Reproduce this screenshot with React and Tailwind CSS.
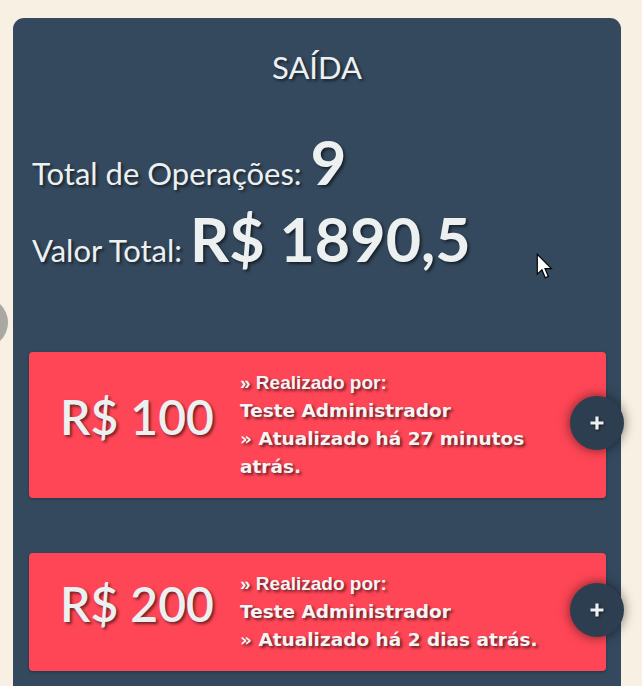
import React from "react";

const items = [
  { amount: "R$ 100", by: "Teste Administrador", when: "» Atualizado há 27 minutos atrás." },
  { amount: "R$ 200", by: "Teste Administrador", when: "» Atualizado há 2 dias atrás." },
];

const hShadow = "[text-shadow:2px_2px_3px_rgba(0,0,0,0.55)]";

function Item({ amount, by, when }) {
  return (
    <div className="relative flex items-center bg-[#ff4656] rounded-[4px] py-[17px] shadow-[0_1px_3px_rgba(0,0,0,0.3)]">
      <div
        className="w-[211px] shrink-0 pl-[5px] mb-[16px] text-center text-[#ecf0f1] text-[48px] leading-none font-semibold [text-shadow:2px_2px_3px_rgba(0,0,0,0.55)]"
        style={{ fontFamily: "Lato, sans-serif" }}
      >
        {amount}
      </div>
      <div className="w-[330px] text-[#f4f4f4] leading-[28px] [text-shadow:2px_2px_3px_rgba(0,0,0,0.6)]">
        <div className="text-[19px] font-bold" style={{ fontFamily: '"Liberation Sans", Arial, sans-serif' }}>
          » Realizado por:
        </div>
        <div className="text-[18.5px] font-bold" style={{ fontFamily: '"DejaVu Sans", sans-serif' }}>
          {by}
          <br />
          {when}
        </div>
      </div>
      <div className="absolute right-[-18px] top-[calc(50%-2px)] -translate-y-1/2 w-[54px] h-[54px] rounded-full bg-[#2c3e50] shadow-[0_0_12px_rgba(0,0,0,0.55)] flex items-center justify-center">
        <svg width="16" height="16" viewBox="0 0 16 16" className="drop-shadow-[1px_1px_1px_rgba(0,0,0,0.6)]">
          <path d="M8 1.5v13M1.5 8h13" stroke="#ecf0f1" strokeWidth="3.2" />
        </svg>
      </div>
    </div>
  );
}

export default function App() {
  return (
    <div className="relative min-h-screen h-[686px] overflow-hidden bg-[#f8f0e3]" style={{ fontFamily: "Lato, sans-serif" }}>
      <div className="absolute left-[-43px] top-[297px] w-[51px] h-[51px] rounded-full bg-[#a9a8a3]" />
      <div className="pt-[18px] pl-[13px] w-[621px]">
        <div className="bg-[#34495e] rounded-[11px] pt-[31px] pb-[40px] text-[#ecf0f1]">
          <div className={`text-center text-[31px] leading-[36px] ${hShadow}`}>SAÍDA</div>
          <div className="pl-[19px] mt-[40px]">
            <div className={`flex items-baseline h-[72px] leading-[72px] ${hShadow}`}>
              <span className="text-[31px]">Total de Operações:</span>
              <span className="text-[62px] font-bold ml-[9px]">9</span>
            </div>
            <div className={`flex items-baseline h-[72px] leading-[72px] mt-[6px] ${hShadow}`}>
              <span className="text-[31px]">Valor Total:</span>
              <span className="text-[61px] font-bold ml-[8px]">R$ 1890,5</span>
            </div>
          </div>
          <div className="mt-[77px] pl-[16px] pr-[15px] flex flex-col gap-[55px]">
            {items.map((it) => (
              <Item key={it.amount} {...it} />
            ))}
          </div>
        </div>
      </div>
      <svg className="absolute left-[536px] top-[253px]" width="18" height="27" viewBox="0 0 14 21">
        <path d="M1 1 L1 16.5 L4.6 13.1 L7.2 19.2 L9.6 18.2 L7 12.2 L12 12.2 Z" fill="#fff" stroke="#000" strokeWidth="0.9" strokeLinejoin="miter" />
      </svg>
    </div>
  );
}
